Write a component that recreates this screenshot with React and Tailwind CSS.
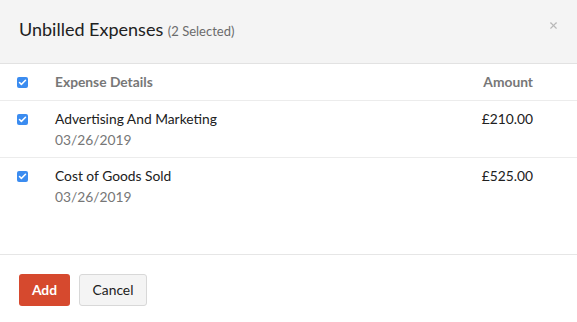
import { Check, X } from 'lucide-react';

const expenses = [
  { id: 1, name: 'Advertising And Marketing', date: '03/26/2019', amount: '£210.00' },
  { id: 2, name: 'Cost of Goods Sold', date: '03/26/2019', amount: '£525.00' },
];

function Tick() {
  return (
    <span className="flex h-[11px] w-[11px] items-center justify-center rounded-[2px] bg-[#3b8cf0]">
      <Check className="h-[9px] w-[9px] text-white" strokeWidth={4} />
    </span>
  );
}

export default function App() {
  return (
    <div className="h-[322px] w-[577px] overflow-hidden bg-white font-['Lato','Liberation_Sans',sans-serif] text-[13.8px] text-[#212121]">
      {/* Header */}
      <div className="flex h-[64px] items-center justify-between border-b border-[#e2e2e2] bg-[#f4f4f4] pb-[4px] pl-[19px] pr-[18px]">
        <h1 className="text-[18px] font-normal text-[#212121]">
          Unbilled Expenses <span className="text-[13px] text-[#6b6b6b]">(2 Selected)</span>
        </h1>
        <X className="-mt-[9px] h-[11px] w-[11px] text-[#b8b8b8]" strokeWidth={2.5} />
      </div>

      {/* Table */}
      <div className="h-[191px] border-b border-[#e6e6e6]">
        <div className="flex h-[37px] items-center border-b border-[#ececec] pl-[17px] pr-[44px]">
          <Tick />
          <span className="ml-[27px] flex-1 font-bold text-[#777]">Expense Details</span>
          <span className="font-bold text-[#777]">Amount</span>
        </div>
        {expenses.map((e, idx) => (
          <div
            key={e.id}
            className={`flex h-[57px] items-start pl-[17px] pr-[44px] pt-[7px] ${idx === 0 ? 'border-b border-[#ececec]' : ''}`}
          >
            <span className="flex h-[22px] items-center"><Tick /></span>
            <div className="ml-[27px] flex-1 leading-[21px]">
              <div>{e.name}</div>
              <div className="text-[#777]">{e.date}</div>
            </div>
            <span className="leading-[21px]">{e.amount}</span>
          </div>
        ))}
      </div>

      {/* Footer */}
      <div className="flex gap-[9px] pl-[19px] pt-[19px]">
        <button className="h-[32px] w-[51px] rounded-[3px] bg-[#d6492e] text-[13.8px] font-bold text-white">Add</button>
        <button className="h-[32px] w-[68px] rounded-[3px] border border-[#d8d8d8] bg-[#f4f4f4] text-[13.8px] text-[#212121]">Cancel</button>
      </div>
    </div>
  );
}
